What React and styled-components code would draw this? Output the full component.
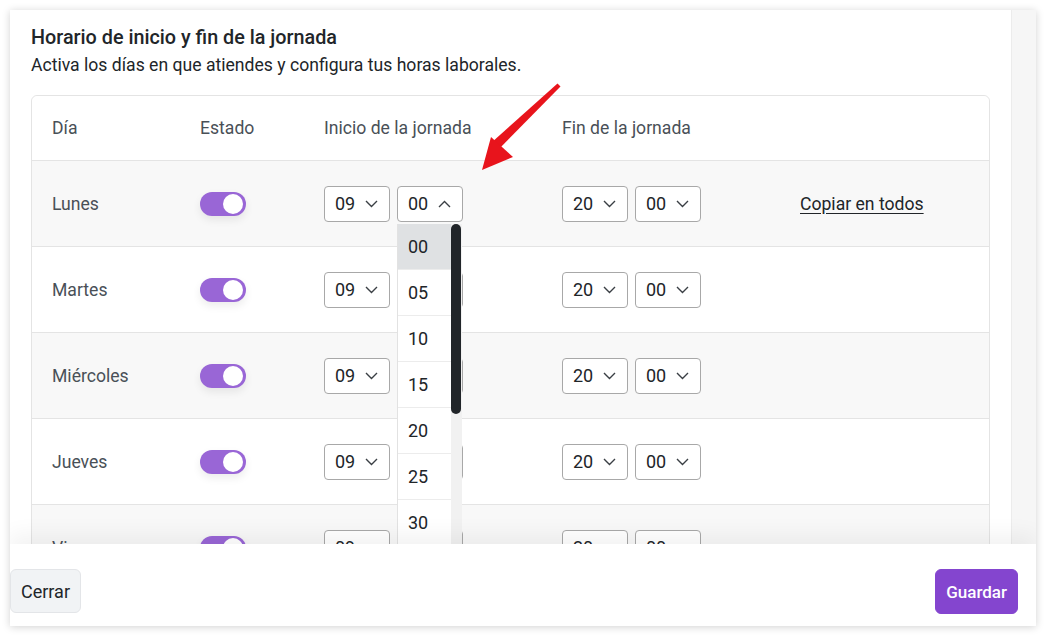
import React from "react";
import styled, { createGlobalStyle } from "styled-components";

const Global = createGlobalStyle`
  html, body { margin: 0; padding: 0; background: #ffffff; }
  body { font-family: Roboto, "Liberation Sans", sans-serif; color: #212529; }
  * { box-sizing: border-box; }
`;

const Page = styled.div`
  position: relative;
  padding: 10px;
  width: 1046px;
  height: 635px;
`;

const Card = styled.div`
  width: 1026px;
  height: 616px;
  background: #fff;
  box-shadow: 0 1px 8px rgba(0, 0, 0, 0.18);
  display: flex;
  flex-direction: column;
  overflow: hidden;
`;

const BodyArea = styled.div`
  height: 534px;
  display: flex;
  overflow: hidden;
`;

const Content = styled.div`
  flex: 1;
  padding: 14px 21px 0 21px;
`;

const Track = styled.div`
  width: 25px;
  background: #f6f6f6;
  border-left: 1px solid #ececec;
`;

const Title = styled.h2`
  margin: 0;
  font-size: 19.8px;
  font-weight: 500;
  line-height: 28px;
  color: #212529;
`;

const Subtitle = styled.p`
  margin: 0 0 17px 0;
  font-size: 17.6px;
  line-height: 26px;
  color: #212529;
`;

const Table = styled.div`
  border: 1px solid #e4e4e4;
  border-radius: 6px;
`;

const Row = styled.div`
  display: grid;
  grid-template-columns: 148px 124px 238px 238px 1fr;
  align-items: center;
  height: ${(p) => (p.$header ? "64px" : "86px")};
  background: ${(p) => (p.$striped ? "#f8f8f8" : "#fff")};
  border-top: ${(p) => (p.$header ? "none" : "1px solid #e4e4e4")};
  border-radius: ${(p) => (p.$header ? "6px 6px 0 0" : "0")};
`;

const Cell = styled.div`
  padding-left: 20px;
  font-size: 17.6px;
  color: #495057;
  display: flex;
  align-items: center;
  gap: 7px;
`;

const Toggle = styled.div`
  width: 46px;
  height: 24px;
  border-radius: 12px;
  background: #9966d6;
  position: relative;
  box-shadow: 0 4px 8px rgba(0, 0, 0, 0.08);
  &::after {
    content: "";
    position: absolute;
    right: 3px;
    top: 2px;
    width: 20px;
    height: 20px;
    border-radius: 50%;
    background: #fff;
  }
`;

const SelectWrap = styled.div`
  position: relative;
`;

const SelectBox = styled.div`
  width: 66px;
  height: 36px;
  border: 1px solid #a8a8a8;
  border-radius: 4px;
  background: #fff;
  display: flex;
  align-items: center;
  justify-content: space-between;
  padding: 0 11px 0 10px;
  font-size: 18px;
  color: #212529;
`;

const Dropdown = styled.div`
  position: absolute;
  top: 38px;
  left: 0;
  width: 65px;
  height: 340px;
  background: #fff;
  border-left: 1px solid #e2e2e2;
  display: flex;
  z-index: 5;
`;

const Options = styled.div`
  flex: 1;
`;

const Option = styled.div`
  height: 46px;
  display: flex;
  align-items: center;
  padding-left: 10px;
  font-size: 18px;
  color: #212529;
  background: ${(p) => (p.$active ? "#dfe1e3" : "#fff")};
  border-bottom: 1px solid #ececec;
`;

const ListScroll = styled.div`
  width: 11px;
  background: #f1f1f1;
  position: relative;
  &::before {
    content: "";
    position: absolute;
    left: 0;
    top: 0;
    width: 10px;
    height: 190px;
    border-radius: 5px;
    background: #212529;
  }
`;

const CopyLink = styled.a`
  font-size: 17.6px;
  color: #212529;
  text-decoration: underline;
  text-underline-offset: 3px;
  cursor: pointer;
`;

const Footer = styled.div`
  flex: 1;
  display: flex;
  align-items: flex-start;
  justify-content: space-between;
  padding: 25px 18px 0 0;
  background: #fff;
  box-shadow: 0 -10px 20px rgba(0, 0, 0, 0.05);
  position: relative;
  z-index: 10;
`;

const Button = styled.button`
  height: ${(p) => (p.$primary ? "45px" : "44px")};
  padding: 0 10px;
  border-radius: 6px;
  font-family: inherit;
  font-size: ${(p) => (p.$primary ? "17px" : "18px")};
  font-weight: ${(p) => (p.$primary ? 500 : 400)};
  color: ${(p) => (p.$primary ? "#fff" : "#212529")};
  background: ${(p) => (p.$primary ? "#8445cf" : "#f1f3f5")};
  border: 1px solid ${(p) => (p.$primary ? "#8445cf" : "#e3e5e8")};
`;

const ArrowSvg = styled.svg`
  position: absolute;
  left: 0;
  top: 0;
  pointer-events: none;
  z-index: 20;
`;

const Chevron = ({ up }) => (
  <svg width="13" height="8" viewBox="0 0 13 8">
    <path
      d={up ? "M1 7l5.5-5.5L12 7" : "M1 1l5.5 5.5L12 1"}
      fill="none"
      stroke="#3a3f44"
      strokeWidth="1.4"
    />
  </svg>
);

const Select = ({ value, open, children }) => (
  <SelectWrap>
    <SelectBox>
      <span>{value}</span>
      <Chevron up={open} />
    </SelectBox>
    {children}
  </SelectWrap>
);

const days = ["Lunes", "Martes", "Miércoles", "Jueves", "Viernes"];
const minutes = ["00", "05", "10", "15", "20", "25", "30", "35"];

export default function App() {
  return (
    <Page>
      <Global />
      <Card>
        <BodyArea>
          <Content>
            <Title>Horario de inicio y fin de la jornada</Title>
            <Subtitle>Activa los días en que atiendes y configura tus horas laborales.</Subtitle>
            <Table>
              <Row $header>
                <Cell>Día</Cell>
                <Cell>Estado</Cell>
                <Cell>Inicio de la jornada</Cell>
                <Cell>Fin de la jornada</Cell>
                <Cell />
              </Row>
              {days.map((d, i) => (
                <Row key={d} $striped={i % 2 === 0}>
                  <Cell>{d}</Cell>
                  <Cell>
                    <Toggle />
                  </Cell>
                  <Cell>
                    <Select value="09" />
                    <Select value="00" open={i === 0}>
                      {i === 0 && (
                        <Dropdown>
                          <Options>
                            {minutes.map((m, k) => (
                              <Option key={m} $active={k === 0}>
                                {m}
                              </Option>
                            ))}
                          </Options>
                          <ListScroll />
                        </Dropdown>
                      )}
                    </Select>
                  </Cell>
                  <Cell>
                    <Select value="20" />
                    <Select value="00" />
                  </Cell>
                  <Cell>{i === 0 && <CopyLink>Copiar en todos</CopyLink>}</Cell>
                </Row>
              ))}
            </Table>
          </Content>
          <Track />
        </BodyArea>
        <Footer>
          <Button>Cerrar</Button>
          <Button $primary>Guardar</Button>
        </Footer>
      </Card>
      <ArrowSvg width="1046" height="635" viewBox="0 0 1046 635">
        <path d="M557.5 83.5 L560.5 86.5 L498 150 L491 143 Z" fill="#e8141c" />
        <path d="M482 170 L491 137 L513 157 Z" fill="#e8141c" />
      </ArrowSvg>
    </Page>
  );
}
